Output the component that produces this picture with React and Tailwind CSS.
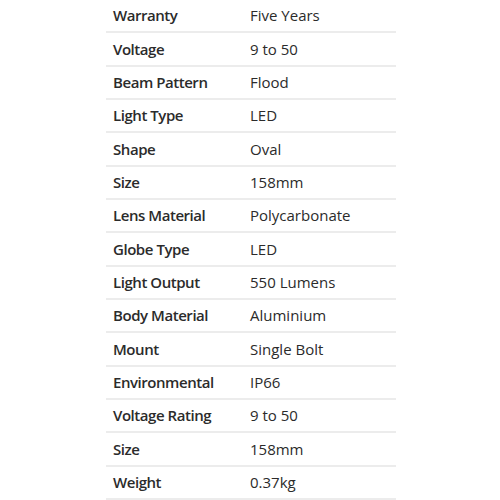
import React from 'react';

const specs = [
  ['Warranty', 'Five Years'],
  ['Voltage', '9 to 50'],
  ['Beam Pattern', 'Flood'],
  ['Light Type', 'LED'],
  ['Shape', 'Oval'],
  ['Size', '158mm'],
  ['Lens Material', 'Polycarbonate'],
  ['Globe Type', 'LED'],
  ['Light Output', '550 Lumens'],
  ['Body Material', 'Aluminium'],
  ['Mount', 'Single Bolt'],
  ['Environmental', 'IP66'],
  ['Voltage Rating', '9 to 50'],
  ['Size', '158mm'],
  ['Weight', '0.37kg'],
];

export default function App() {
  return (
    <div className="w-[500px] h-[500px] bg-white overflow-hidden font-['Open_Sans',Arial,sans-serif] text-[15px] text-[#2b2b2b]">
      <div className="ml-[106px] w-[290px] flex flex-col">
        {specs.map(([label, value], i) => (
          <div
            key={i}
            className="h-[33.33px] flex items-center border-b-2 border-[#ececec] box-border"
          >
            <div className="w-[144px] pl-[7px] font-semibold tracking-[-0.45px]">{label}</div>
            <div>{value}</div>
          </div>
        ))}
      </div>
    </div>
  );
}
